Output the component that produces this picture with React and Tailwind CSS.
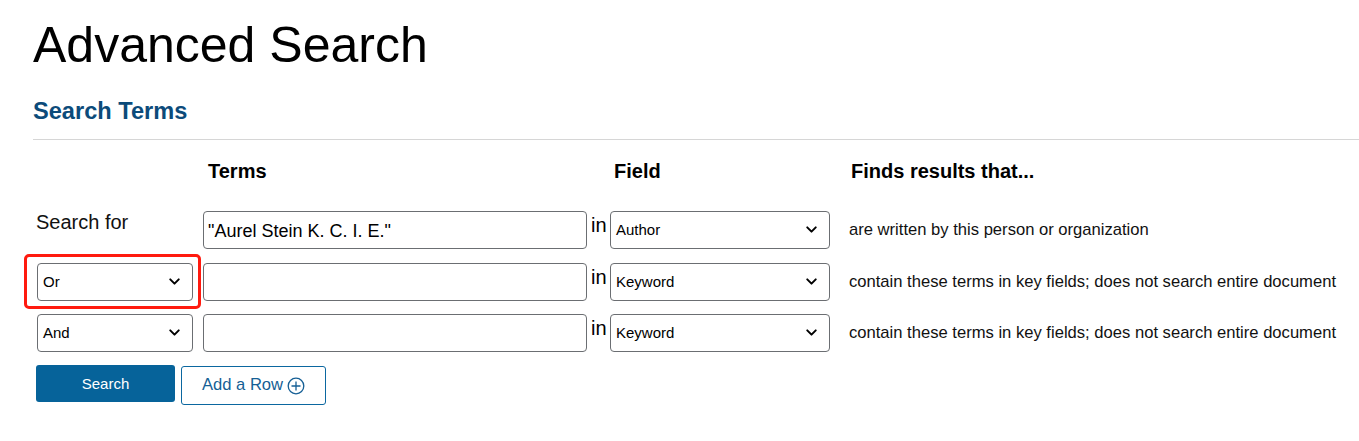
import { ChevronDown } from 'lucide-react';

const FONT = { fontFamily: '"Liberation Sans", Arial, sans-serif' };

const KEYWORD_DESC = 'contain these terms in key fields; does not search entire document';

const ROWS = [
  { op: null, term: '"Aurel Stein K. C. I. E."', field: 'Author', desc: 'are written by this person or organization' },
  { op: 'Or', term: '', field: 'Keyword', desc: KEYWORD_DESC, highlight: true },
  { op: 'And', term: '', field: 'Keyword', desc: KEYWORD_DESC },
];

function FakeSelect({ value, className }) {
  return (
    <div className={`relative h-[38px] rounded-[4px] border border-[#6b6e72] bg-white flex items-center pl-[5px] text-[15px] text-black ${className}`}>
      <span>{value}</span>
      <ChevronDown className="absolute right-[9px] top-[9px] w-[17px] h-[17px] text-black" strokeWidth={2.8} />
    </div>
  );
}

function Row({ row, top }) {
  return (
    <div className={`flex items-start ${top}`}>
      <div className="w-[160px] pl-[4px] relative">
        {row.op ? (
          <>
            {row.highlight && (
              <div className="absolute left-[-9px] top-[-9px] w-[177px] h-[55px] rounded-[5px] border-[3px] border-[#ff1a0f]" />
            )}
            <FakeSelect value={row.op} className="w-[156px]" />
          </>
        ) : (
          <div className="text-[20px] leading-[24px] ml-[-1px] mt-[-1px] text-[#111]">Search for</div>
        )}
      </div>
      <input
        defaultValue={row.term}
        className="ml-[10px] w-[384px] h-[38px] rounded-[4px] border border-[#6b6e72] px-[4px] pt-[3px] text-[18px] text-black outline-none"
        style={FONT}
      />
      <span className="w-[23px] pl-[4px] text-[20px] leading-[24px] mt-[2px] text-black">in</span>
      <FakeSelect value={row.field} className="w-[220px]" />
      <div className="ml-[19px] h-[38px] flex items-center pt-[1px] text-[16.6px] text-[#111]">{row.desc}</div>
    </div>
  );
}

export default function App() {
  return (
    <div className="bg-white min-h-[441px] pl-[33px] pt-[20px]" style={FONT}>
      <h1 className="text-[50px] leading-[50px] text-black">Advanced Search</h1>
      <h2 className="mt-[27px] text-[23.6px] leading-[28px] font-bold text-[#0c4b7a]">Search Terms</h2>
      <div className="mt-[14px] h-px bg-[#d6d6d6]" />

      <div className="flex items-start mt-[19px] text-[20px] leading-[24px] font-bold text-black">
        <span className="w-[175px]" />
        <span className="w-[406px]">Terms</span>
        <span className="w-[237px]">Field</span>
        <span>Finds results that...</span>
      </div>

      <Row row={ROWS[0]} top="mt-[28px]" />
      <Row row={ROWS[1]} top="mt-[14px]" />
      <Row row={ROWS[2]} top="mt-[13px]" />

      <div className="flex items-start mt-[13px] pl-[3px] gap-[6px]">
        <button className="w-[139px] h-[37px] rounded-[3px] bg-[#06639a] text-white text-[15px] pt-[2px]">Search</button>
        <button className="mt-[1px] w-[145px] h-[39px] rounded-[3px] border border-[#0b67a0] bg-white text-[#155f95] text-[16.6px] flex items-center justify-center gap-[4px]">
          Add a Row
          <svg width="18" height="18" viewBox="0 0 18 18" fill="none" stroke="#155f95" strokeWidth="1.3">
            <circle cx="9" cy="9" r="7.8" />
            <path d="M9 4.5v9M4.5 9h9" />
          </svg>
        </button>
      </div>
    </div>
  );
}
